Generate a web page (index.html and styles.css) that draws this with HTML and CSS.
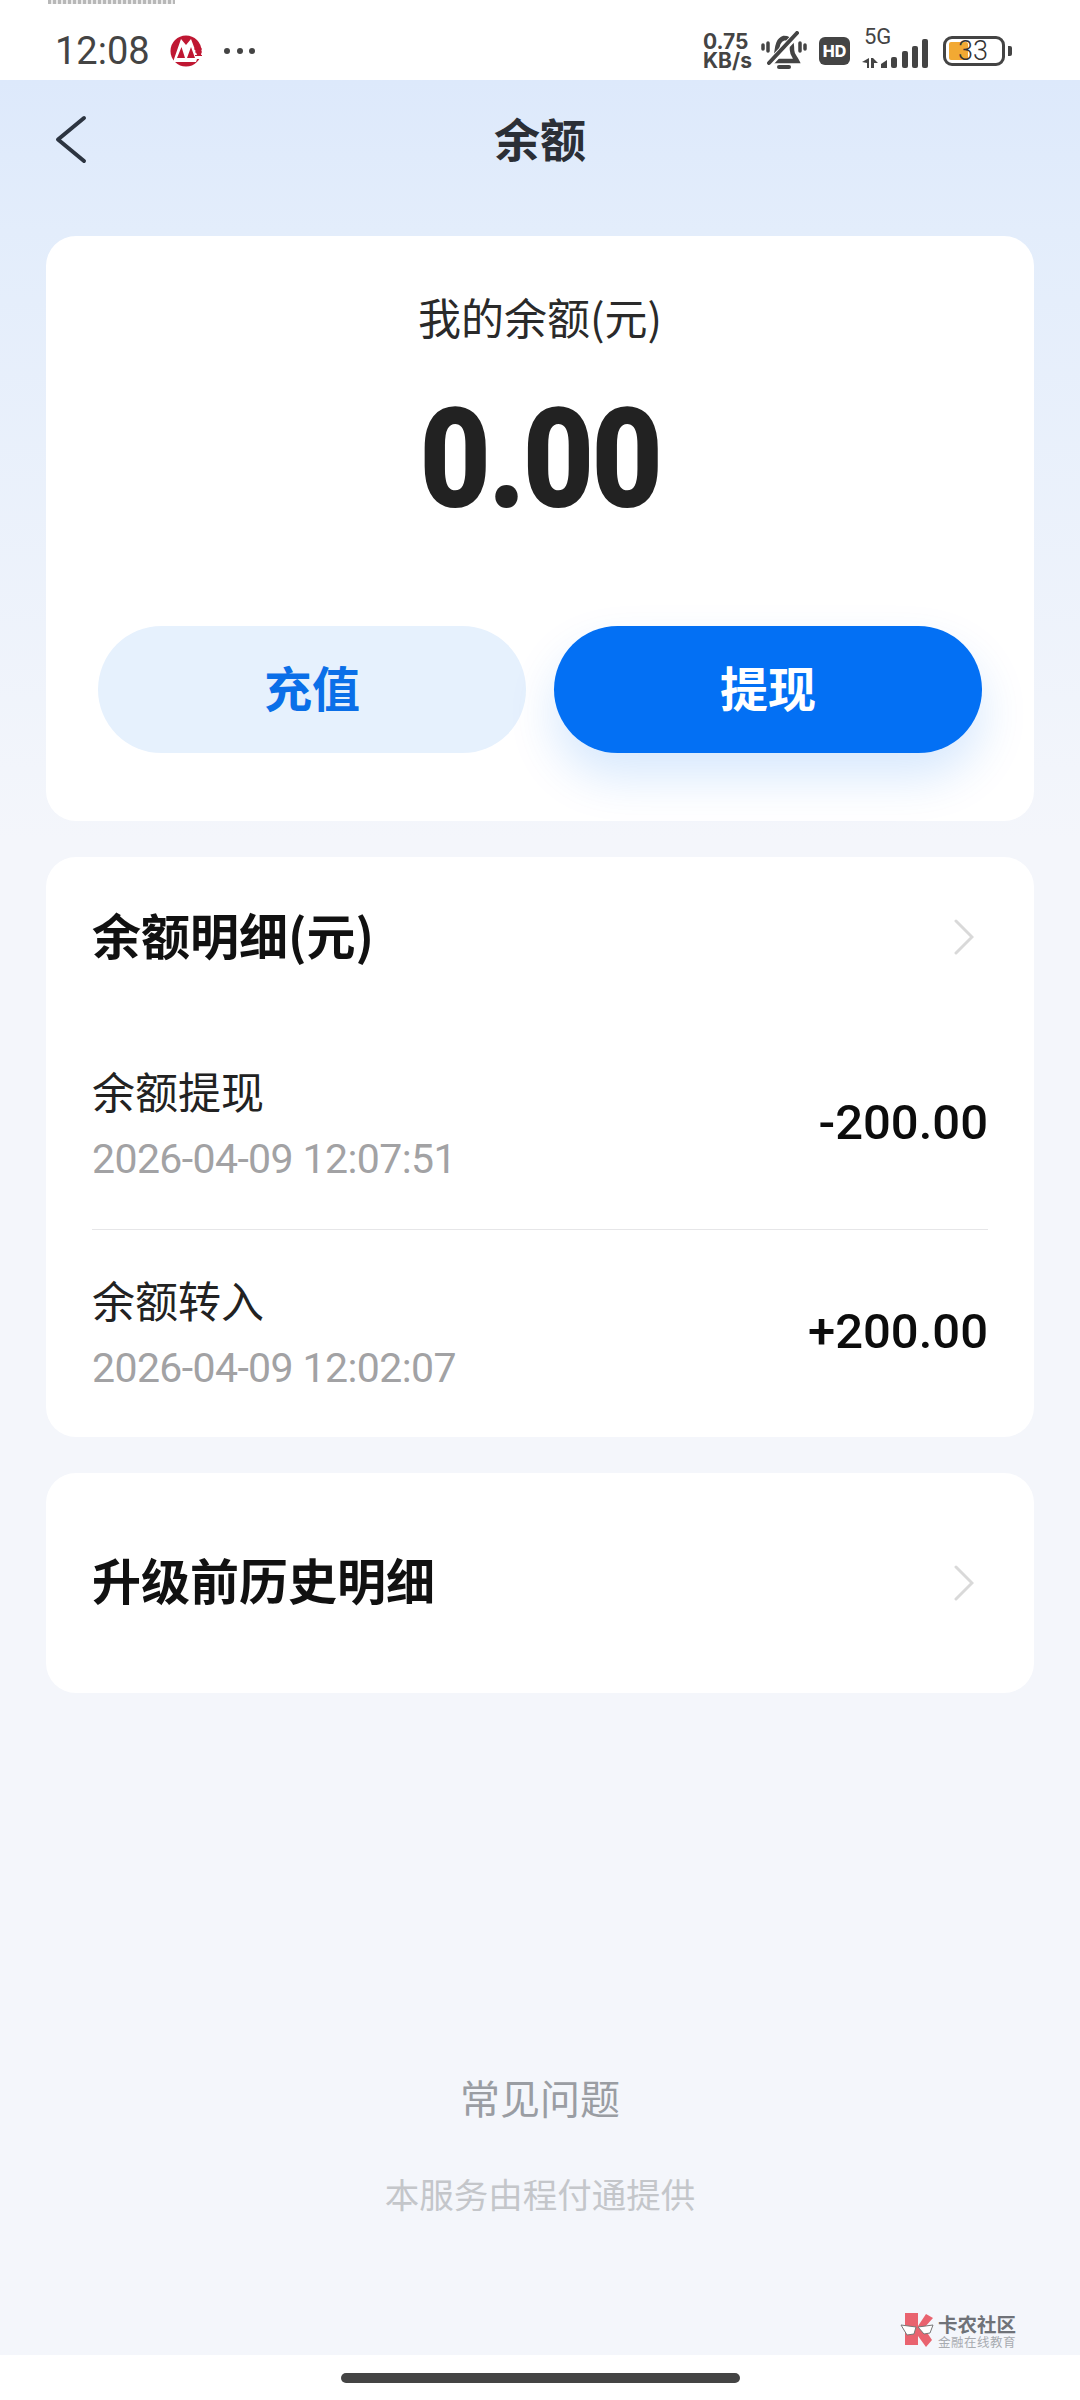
FILE: index.html
```html
<!DOCTYPE html>
<html lang="zh-CN">
<head>
<meta charset="utf-8">
<title>余额</title>
<link rel="stylesheet" href="styles.css">
</head>
<body>
<div class="app">
  <div class="speck"></div>
  <header class="status">
    <div class="status-left">
      <span class="time">12:08</span>
      <svg class="cmb" viewBox="0 0 32 32" width="32" height="32">
        <circle cx="16" cy="16" r="15.5" fill="#bf1732"/>
        <path d="M3 27 L11 4 L16 10 L21 4 L27 20 H32 V24 H27 L26 27 Z" fill="#fff"/>
        <path d="M7 23 L11.500 12 L15 23 Z M17 23 L21 12 L25 23 Z" fill="#bf1732"/>
        <path d="M24 14 H32 M25 17 H32 M25 20.500 H32" stroke="#bf1732" stroke-width="1"/>
      </svg>
      <span class="dots"><i></i><i></i><i></i></span>
    </div>
    <div class="status-right">
      <span class="speed"><b>0.75</b><b>KB/s</b></span>
      <svg class="bell" viewBox="0 0 46 40" width="46" height="40" fill="none" stroke="#444" stroke-linecap="round">
        <path d="M14 27 C17 22 14 10 23 7 C31 7 31 14 31 19 C31 24 34 26 36 30 H11" stroke-width="4.500"/>
        <path d="M8 33 L37 2" stroke="#fff" stroke-width="7"/>
        <path d="M8 32 L36 2" stroke-width="4"/>
        <path d="M18 36 H28" stroke-width="4"/>
        <path d="M7 12 V20 M2 14 V18 M39 12 V20 M44 14 V18" stroke-width="3.500"/>
      </svg>
      <span class="hd">HD</span>
      <span class="signal">
        <span class="five-g">5G</span>
        <svg viewBox="0 0 66 32" width="66" height="32" fill="#444">
          <path d="M0 24 L7 20 V30 H5 V25 Z M9 30 V20 H11 L16 25 H12 V30 Z"/>
          <path d="M19 30 V26 L25 22 V30 Z"/>
          <rect x="29" y="19" width="6" height="11" rx="2"/>
          <rect x="40" y="13" width="6" height="17" rx="2"/>
          <rect x="50" y="8" width="6" height="22" rx="2"/>
          <rect x="60" y="1" width="6" height="29" rx="2"/>
        </svg>
      </span>
      <span class="battery"><span class="battery-fill"></span><span class="battery-text">33</span></span>
      <span class="battery-nub"></span>
    </div>
  </header>

  <main class="page">
    <nav class="nav">
      <svg class="back" viewBox="0 0 32 50" width="32" height="50" fill="none" stroke="#2c3440" stroke-width="4" stroke-linecap="round" stroke-linejoin="round">
        <path d="M29 3 L3 24.500 L29 46"/>
      </svg>
      <h1 class="nav-title">余额</h1>
    </nav>

    <div class="cards">
      <section class="card balance">
        <div class="balance-label">我的余额(元)</div>
        <div class="balance-amount"><span>0.00</span></div>
        <div class="actions">
          <button class="btn btn-light"><span class="btn-text">充值</span></button>
          <button class="btn btn-primary"><span class="btn-text">提现</span></button>
        </div>
      </section>

      <section class="card details">
        <div class="details-head">
          <span class="card-title">余额明细(元)</span>
          <svg class="chev" viewBox="0 0 20 36" width="20" height="36" fill="none" stroke="#d9d9d9" stroke-width="3" stroke-linecap="round"><path d="M2 2 L18 18 L2 34"/></svg>
        </div>
        <div class="row">
          <div>
            <div class="row-label">余额提现</div>
            <div class="row-date">2026-04-09 12:07:51</div>
          </div>
          <div class="row-value">-200.00</div>
        </div>
        <div class="row">
          <div>
            <div class="row-label">余额转入</div>
            <div class="row-date">2026-04-09 12:02:07</div>
          </div>
          <div class="row-value">+200.00</div>
        </div>
      </section>

      <section class="card history">
        <span class="card-title history-title">升级前历史明细</span>
        <svg class="chev" viewBox="0 0 20 36" width="20" height="36" fill="none" stroke="#d9d9d9" stroke-width="3" stroke-linecap="round"><path d="M2 2 L18 18 L2 34"/></svg>
      </section>
    </div>

    <div class="foot">
      <div class="faq">常见问题</div>
      <div class="provider">本服务由程付通提供</div>
    </div>
  </main>

  <footer class="home"><span class="home-bar"></span></footer>

  <div class="watermark">
    <svg viewBox="0 0 38 38" width="38" height="38">
      <path d="M5 1 H18 V14 L26 2 L33 6 L24 16 L32 28 L26 35 L18 24 V33 H5 Z" fill="#e9636f"/>
      <path d="M1 13 L16 15 L14 22 L7 23 Z M18 15 L33 13 L30 21 L24 22 Z" fill="#fff" stroke="#777" stroke-width="1"/>
    </svg>
    <div class="wm-text">
      <span class="wm-name">卡农社区</span>
      <span class="wm-sub">金融在线教育</span>
    </div>
  </div>
</div>
</body>
</html>
```

FILE: styles.css
```css
* { box-sizing: border-box; margin: 0; padding: 0; }
html, body { width: 1080px; height: 2400px; background: #fff; }
body {
  font-family: "Noto Sans CJK SC", "Noto Sans", sans-serif;
  color: #222;
  overflow: hidden;
}
.app {
  position: relative;
  width: 1080px;
  height: 2400px;
  display: flex;
  flex-direction: column;
}
.speck {
  position: absolute;
  left: 48px;
  top: 0;
  width: 127px;
  height: 4px;
  background: repeating-linear-gradient(90deg, #999 0 3px, #e2e2e2 3px 5px);
  opacity: .7;
}

/* status bar */
.status {
  height: 80px;
  background: #fff;
  display: flex;
  justify-content: space-between;
  align-items: center;
  padding: 22px 68px 0 55px;
  flex: none;
}
.status-left, .status-right { display: flex; align-items: center; }
.time {
  font-family: "Roboto", sans-serif;
  font-size: 38px;
  line-height: 44px;
  color: #444;
  width: 115px;
}
.cmb { display: block; }
.dots { display: flex; gap: 6.500px; margin-left: 22px; }
.dots i { width: 6px; height: 6px; border-radius: 50%; background: #444; display: block; }
.speed {
  display: flex;
  flex-direction: column;
  font-family: "Inter", sans-serif;
  font-size: 21px;
  line-height: 19px;
  color: #444;
  width: 58px;
}
.speed b { font-weight: 700; }
.bell { display: block; margin-right: 12px; }
.hd {
  width: 31px;
  height: 28px;
  border-radius: 6px;
  background: #444;
  color: #fff;
  font-family: "Inter", sans-serif;
  font-weight: 800;
  font-size: 16px;
  line-height: 28px;
  text-align: center;
  margin-right: 12px;
}
.signal { position: relative; width: 66px; height: 32px; margin-top: 6px; margin-right: 15px; }
.signal svg { display: block; }
.five-g {
  position: absolute;
  left: 2px;
  top: -11px;
  font-family: "Roboto", sans-serif;
  font-size: 22px;
  line-height: 20px;
  color: #444;
}
.battery {
  position: relative;
  width: 62px;
  height: 30px;
  border: 3.500px solid #444;
  border-radius: 9px;
  display: block;
}
.battery-fill {
  position: absolute;
  left: 3px;
  top: 3px;
  bottom: 3px;
  width: 19px;
  background: #f2a933;
  border-radius: 2px;
}
.battery-text {
  position: absolute;
  left: 12px;
  top: -3px;
  font-family: "Roboto", sans-serif;
  font-weight: 300;
  font-size: 27px;
  line-height: 30px;
  color: #333;
}
.battery-nub {
  width: 4px;
  height: 10px;
  background: #444;
  border-radius: 0 2px 2px 0;
  margin-left: 3px;
}

/* page */
.page {
  flex: 1;
  background: linear-gradient(180deg, #dde9fb 0, #e3edfb 150px, #f4f6fb 760px, #f4f6fb 100%);
  display: flex;
  flex-direction: column;
}
.nav {
  position: relative;
  height: 156px;
  flex: none;
  padding-top: 32px;
  text-align: center;
}
.back { position: absolute; left: 55px; top: 35px; display: block; }
.nav-title {
  font-size: 46px;
  line-height: 50px;
  font-weight: 700;
  color: #2b2f36;
}
.cards {
  display: flex;
  flex-direction: column;
  gap: 36px;
  padding: 0 46px;
}
.card { background: #fff; border-radius: 30px; }
.balance { padding: 50px 52px 68px; text-align: center; }
.balance-label { font-size: 43px; line-height: 60px; color: #2a2a2a; }
.balance-amount {
  margin-top: 53px;
  height: 120px;
  font-family: "Roboto", sans-serif;
  font-weight: 900;
  font-size: 140px;
  line-height: 120px;
  color: #222;
}
.balance-amount span { display: inline-block; transform: scaleX(.88); letter-spacing: -3px; }
.actions {
  margin-top: 107px;
  display: grid;
  grid-template-columns: 1fr 1fr;
  gap: 28px;
}
.btn {
  height: 127px;
  border: 0;
  border-radius: 64px;
  font-family: inherit;
  font-size: 48px;
  font-weight: 700;
  padding-bottom: 8px;
}
.btn-text { display: block; }
.btn-light { background: #e6f1fd; color: #0a6fe8; }
.btn-primary {
  background: #0370f4;
  color: #fff;
  box-shadow: 0 24px 48px rgba(3, 112, 244, .16);
}
.details { padding: 0 46px; height: 580px; }
.details-head {
  display: flex;
  justify-content: space-between;
  align-items: center;
  padding: 50px 14px 54px 0;
}
.details-head .card-title { margin-top: -3px; margin-bottom: 3px; }
.card-title { font-size: 49px; line-height: 60px; font-weight: 700; color: #111; }
.history-title { padding-bottom: 8px; line-height: 52px; }
.chev { display: block; }
.row {
  display: flex;
  justify-content: space-between;
  align-items: center;
  padding: 39px 0 45px;
  border-bottom: 1px solid #e6e6e8;
}
.row:last-child { border-bottom: 0; }
.row-label { font-size: 43px; line-height: 60px; color: #222; }
.row-date {
  margin-top: 14px;
  font-family: "Roboto", sans-serif;
  font-size: 41px;
  line-height: 50px;
  letter-spacing: -.6px;
  color: #a2a2a4;
}
.row-value {
  font-family: "Roboto", sans-serif;
  font-weight: 500;
  font-size: 49px;
  line-height: 60px;
  color: #0c0c0c;
  padding-top: 2px;
}
.history {
  height: 220px;
  display: flex;
  justify-content: space-between;
  align-items: center;
  padding: 0 60px 0 46px;
}
.foot {
  margin-top: 374px;
  text-align: center;
}
.faq { font-size: 40px; line-height: 60px; color: #9a9da3; }
.provider { margin-top: 41px; font-size: 34.500px; line-height: 50px; color: #c4c6ca; }

/* gesture bar */
.home {
  height: 45px;
  flex: none;
  background: #fff;
  display: flex;
  justify-content: center;
  padding-top: 18px;
}
.home-bar { width: 399px; height: 10px; border-radius: 5px; background: #444; }

/* forum watermark */
.watermark {
  position: absolute;
  left: 900px;
  top: 2312px;
  display: flex;
  align-items: center;
}
.watermark svg { display: block; }
.wm-text { display: flex; flex-direction: column; }
.wm-name { font-size: 19.500px; line-height: 21px; font-weight: 700; color: #6f7278; white-space: nowrap; }
.wm-sub { font-size: 12.500px; line-height: 16px; color: #a8abb0; white-space: nowrap; letter-spacing: .5px; }
```
